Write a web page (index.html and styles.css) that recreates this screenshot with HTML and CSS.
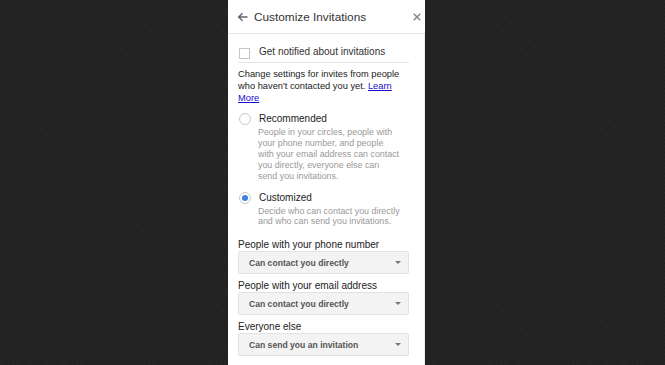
FILE: index.html
```html
<!DOCTYPE html>
<html>
<head>
<meta charset="utf-8">
<link rel="stylesheet" href="styles.css">
</head>
<body>
<div class="panel">
  <div class="header">
    <svg class="back" width="11" height="10" viewBox="0 0 11 10"><path d="M10.5 5H1.8M5.5 1.2L1.6 5l3.9 3.8" fill="none" stroke="#666" stroke-width="1.4"/></svg>
    <span class="title">Customize Invitations</span>
    <svg class="close" width="8" height="8" viewBox="0 0 8 8"><path d="M0.7 0.7L7.3 7.3M7.3 0.7L0.7 7.3" stroke="#888" stroke-width="1.5"/></svg>
  </div>
  <div class="content">
    <div class="notify">
      <span class="checkbox"></span>
      <span class="notify-label">Get notified about invitations</span>
    </div>
    <p class="intro">Change settings for invites from people who haven't contacted you yet. <a href="#">Learn More</a></p>
    <div class="option first">
      <span class="radio"></span>
      <span class="opt-label">Recommended</span>
    </div>
    <p class="desc">People in your circles, people with<br>your phone number, and people<br>with your email address can contact<br>you directly, everyone else can<br>send you invitations.</p>
    <div class="option second">
      <span class="radio checked"></span>
      <span class="opt-label">Customized</span>
    </div>
    <p class="desc">Decide who can contact you directly<br>and who can send you invitations.</p>
    <div class="group first-group">
      <div class="group-label">People with your phone number</div>
      <div class="select"><span>Can contact you directly</span><span class="caret"></span></div>
    </div>
    <div class="group">
      <div class="group-label">People with your email address</div>
      <div class="select"><span>Can contact you directly</span><span class="caret"></span></div>
    </div>
    <div class="group">
      <div class="group-label">Everyone else</div>
      <div class="select"><span>Can send you an invitation</span><span class="caret"></span></div>
    </div>
  </div>
</div>
</body>
</html>
```

FILE: styles.css
```css
html, body {
  margin: 0;
  padding: 0;
  height: 100%;
}
body {
  background-color: #232323;
  background-image:
    repeating-linear-gradient(45deg, rgba(255,255,255,0.015) 0 1px, transparent 1px 3px),
    repeating-linear-gradient(-45deg, rgba(0,0,0,0.08) 0 1px, transparent 1px 3px);
  font-family: "Liberation Sans", Arial, sans-serif;
  overflow: hidden;
}
.panel {
  margin-left: 228px;
  width: 197px;
  height: 365px;
  background: #fff;
  box-sizing: border-box;
}
.header {
  border-bottom: 1px solid #e8e8e8;
  display: flex;
  align-items: center;
  padding: 1px 0 0 9px;
  height: 32px;
}
.back {
  display: block;
  margin-right: 6px;
}
.title {
  font-size: 11.8px;
  color: #333;
  flex: 1;
}
.close {
  display: block;
  margin-right: 4px;
}
.content {
  padding: 0 15px 0 10px;
  border-right: 1px solid #ececec;
  height: 331px;
}
.notify {
  display: flex;
  align-items: center;
  padding: 12px 0 4px 1px;
  height: 12px;
  border-bottom: 1px solid #e6e6e6;
}
.checkbox {
  width: 9px;
  height: 9px;
  border: 1px solid #c6c6c6;
  margin-right: 9px;
  margin-top: 2px;
}
.notify-label {
  font-size: 10px;
  line-height: 12px;
  color: #333;
}
.intro {
  margin: 5px 0 0 0;
  font-size: 9.3px;
  line-height: 12px;
  color: #222;
}
.intro a {
  color: #1a0dcc;
  text-decoration: underline;
}
.option {
  display: flex;
  align-items: center;
  height: 12px;
}
.option.first {
  margin-top: 9px;
}
.option.second {
  margin-top: 10px;
}
.radio {
  width: 10px;
  height: 10px;
  border: 1px solid #c8c8c8;
  border-radius: 50%;
  margin-left: 1px;
  margin-right: 8px;
  box-sizing: content-box;
  position: relative;
}
.radio.checked::after {
  content: "";
  position: absolute;
  left: 2px;
  top: 2px;
  width: 6px;
  height: 6px;
  border-radius: 50%;
  background: #3f7fe8;
}
.opt-label {
  font-size: 10px;
  line-height: 12px;
  color: #222;
}
.desc {
  margin: 2px 0 0 20px;
  white-space: nowrap;
  font-size: 8.9px;
  line-height: 10.9px;
  color: #999;
}
.group {
  margin-top: 6px;
}
.group.first-group {
  margin-top: 12px;
}
.group-label {
  font-size: 10px;
  line-height: 12px;
  color: #222;
}
.select {
  height: 21px;
  border: 1px solid #e2e2e2;
  border-radius: 2px;
  background: #f3f3f3;
  display: flex;
  align-items: center;
  justify-content: space-between;
  padding: 0 7px 0 10px;
  font-size: 8.6px;
  font-weight: bold;
  color: #555;
}
.caret {
  width: 0;
  height: 0;
  border-left: 3.5px solid transparent;
  border-right: 3.5px solid transparent;
  border-top: 3.5px solid #777;
}
```
